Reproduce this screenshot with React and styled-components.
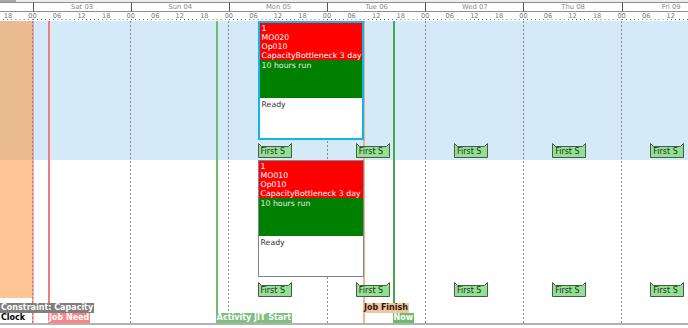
import React from 'react';
import styled, { createGlobalStyle } from 'styled-components';

// time scale: one day = 98.2px, Sat 03 00:00 sits at x = 32.5
const DAY = 98.2;
const ORIGIN = 32.5;
const VIEW = 688;
const at = (day, hour = 0) => ORIGIN + (day + hour / 24) * DAY;

const GlobalStyle = createGlobalStyle`
  html, body {
    margin: 0;
    padding: 0;
    background: #fff;
  }

  body {
    font-family: "DejaVu Sans", Verdana, sans-serif;
  }
`;

const Frame = styled.div`
  width: ${VIEW}px;
  height: 328px;
  overflow: hidden;
  background: #fff;
`;

const Scrollbar = styled.div`
  height: 2px;
  background: #ececec;
`;

const Thumb = styled.div`
  width: 16px;
  height: 100%;
  background: #a8a8a8;
`;

const Ruler = styled.div`
  overflow: hidden;
`;

const Track = styled.div`
  display: flex;
  margin-left: ${ORIGIN - DAY}px;
  width: ${DAY * 8}px;
`;

const DayColumn = styled.div`
  flex: 0 0 ${DAY}px;
  display: flex;
  flex-direction: column;
`;

const DayLabel = styled.div`
  height: 8px;
  border-top: 1px solid #8e8e8e;
  border-bottom: 1px solid #8e8e8e;
  border-left: 1px solid #555;
  font-size: 6.8px;
  line-height: 8px;
  color: #8a8a8a;
  text-align: center;
  white-space: nowrap;
`;

const HourRow = styled.div`
  height: 9px;
  display: flex;
  background-image: linear-gradient(to right, #5a5a5a 1px, transparent 1px);
  background-size: ${DAY / 24}px 1px;
  background-repeat: repeat-x;
  background-position: 0 7px;
`;

const HourTick = styled.div`
  flex: 0 0 ${DAY / 4}px;
  font-size: 6.6px;
  line-height: 7px;
  padding-top: 1px;
  color: #777;

  span {
    display: inline-block;
    transform: translateX(-50%);
  }
`;

const Body = styled.div`
  position: relative;
  isolation: isolate;
  display: flex;
  flex-direction: column;
  border-bottom: 2px solid #b2b2b2;
`;

const Row = styled.div`
  position: relative;
  height: ${p => p.$height}px;
  background: ${p => (p.$tone === 'blue' ? '#d5eaf9' : '#fff')};
`;

const LegendStrip = styled.div`
  position: relative;
  height: 25px;
`;

const ConstraintZone = styled.div`
  position: absolute;
  left: 0;
  top: 0;
  width: 32px;
  height: 277px;
  background: rgba(255, 150, 60, 0.55);
  z-index: 1;
`;

const DayDivider = styled.div`
  position: absolute;
  top: 0;
  bottom: 0;
  width: 1px;
  background: repeating-linear-gradient(to bottom, #8c8c8c 0 2px, transparent 2px 4px);
  z-index: 1;
`;

const TimeLine = styled.div`
  position: absolute;
  top: 0;
  bottom: 0;
  width: 2px;
  background: ${p => p.$color};
  z-index: 2;
`;

const Tag = styled.div`
  position: absolute;
  top: ${p => (p.$lane === 0 ? 5 : 15)}px;
  height: 10px;
  padding: 0 1px;
  font-size: 8px;
  font-weight: bold;
  line-height: 10px;
  white-space: nowrap;
  color: ${p => p.$fg};
  background: ${p => p.$bg};
  z-index: 4;
`;

const Card = styled.div`
  position: absolute;
  top: 0;
  box-sizing: border-box;
  display: flex;
  flex-direction: column;
  overflow: hidden;
  background: #fff;
  border: ${p => (p.$selected ? '2px solid #14b3ee' : '1px solid #7b8894')};
  font-size: 7.8px;
  line-height: 9px;
  z-index: 3;
`;

const CardHead = styled.div`
  height: 37px;
  padding: 1px 2px 0;
  box-sizing: border-box;
  background: #ff0000;
  color: #fff;
  white-space: nowrap;
`;

const CardRun = styled.div`
  height: 38px;
  padding: 1px 2px 0;
  box-sizing: border-box;
  background: #008000;
  color: #e4efe4;
`;

const CardStatus = styled.div`
  flex: 1;
  padding: 2px 2px 0;
  color: #333;
`;

const Flag = styled.div`
  position: absolute;
  top: 122px;
  width: 34px;
  height: 15px;
  z-index: 3;

  svg {
    position: absolute;
    inset: 0;
  }
`;

const FlagText = styled.span`
  position: relative;
  display: block;
  padding: 4px 0 0 3px;
  font-size: 8px;
  line-height: 10px;
  color: #1d301d;
  white-space: nowrap;
`;

// the first column (Fri 02) is only partly in view, its caption falls off screen
const days = ['', 'Sat 03', 'Sun 04', 'Mon 05', 'Tue 06', 'Wed 07', 'Thu 08', 'Fri 09'];
const hours = ['00', '06', '12', '18'];

const rows = [
  { id: 'r1', tone: 'blue', height: 139, card: { n: '1', mo: 'MO020', op: 'Op010', h: 119, selected: true } },
  { id: 'r2', tone: 'white', height: 138, card: { n: '1', mo: 'MO010', op: 'Op010', h: 117, selected: false } },
];

const lines = [
  { id: 'clock', x: at(0) - 1, color: 'rgba(238, 96, 96, 0.5)', label: 'Clock', tagX: 0, lane: 1, bg: 'transparent', fg: '#000' },
  { id: 'need', x: at(0, 3.8), color: '#f27c7c', label: 'Job Need', lane: 1, bg: '#fb8585', fg: '#fff' },
  { id: 'jit', x: at(1, 20.8), color: '#72bb72', label: 'Activity JIT Start', lane: 1, bg: '#80c080', fg: '#fff' },
  { id: 'finish', x: at(3, 9) - 1, color: 'rgba(240, 168, 118, 0.85)', label: 'Job Finish', lane: 0, bg: '#f2c39c', fg: '#2a1a10' },
  { id: 'now', x: at(3, 16), color: '#4aa54a', label: 'Now', lane: 1, bg: '#6dbb6d', fg: '#fff' },
];

const inView = x => x > 4 && x < VIEW - 4;

const FlagShape = () => (
  <svg width="34" height="15" viewBox="0 0 34 15">
    <path
      d="M0.5 0.5 L3.5 3.5 H30.5 L33.5 0.5 V14.5 H0.5 Z"
      fill="#93e093"
      stroke="#4a5a4a"
      strokeWidth="1"
    />
  </svg>
);

const App = () => {
  const cardLeft = at(2, 7);
  const cardWidth = (26 / 24) * DAY;

  return (
    <>
      <GlobalStyle />
      <Frame>
        <Scrollbar>
          <Thumb />
        </Scrollbar>

        <Ruler>
          <Track>
            {days.map((d, i) => (
              <DayColumn key={i}>
                <DayLabel>{d}</DayLabel>
                <HourRow>
                  {hours.map((h, j) => (
                    <HourTick key={h}>
                      {inView(at(i - 1, j * 6)) && <span>{h}</span>}
                    </HourTick>
                  ))}
                </HourRow>
              </DayColumn>
            ))}
          </Track>
        </Ruler>

        <Body>
          {rows.map(row => (
            <Row key={row.id} $tone={row.tone} $height={row.height}>
              <Card
                $selected={row.card.selected}
                style={{ left: cardLeft, width: cardWidth, height: row.card.h }}
              >
                <CardHead>
                  {row.card.n}
                  <br />
                  {row.card.mo}
                  <br />
                  {row.card.op}
                  <br />
                  CapacityBottleneck 3 day
                </CardHead>
                <CardRun>10 hours run</CardRun>
                <CardStatus>Ready</CardStatus>
              </Card>

              {[2, 3, 4, 5, 6].map(d => (
                <Flag key={d} style={{ left: at(d, 7) }}>
                  <FlagShape />
                  <FlagText>First S</FlagText>
                </Flag>
              ))}
            </Row>
          ))}

          <LegendStrip>
            <Tag $lane={0} $bg="#7f7f7f" $fg="#fff" style={{ left: 0 }}>
              Constraint: Capacity
            </Tag>
            {lines.map(l => (
              <Tag
                key={l.id}
                $lane={l.lane}
                $bg={l.bg}
                $fg={l.fg}
                style={{ left: l.tagX ?? l.x }}
              >
                {l.label}
              </Tag>
            ))}
          </LegendStrip>

          <ConstraintZone />
          {[0, 1, 2, 3, 4, 5, 6].map(d => (
            <DayDivider key={d} style={{ left: Math.floor(at(d)) }} />
          ))}
          {lines.map(l => (
            <TimeLine key={l.id} $color={l.color} style={{ left: l.x }} />
          ))}
        </Body>
      </Frame>
    </>
  );
};

export default App;
